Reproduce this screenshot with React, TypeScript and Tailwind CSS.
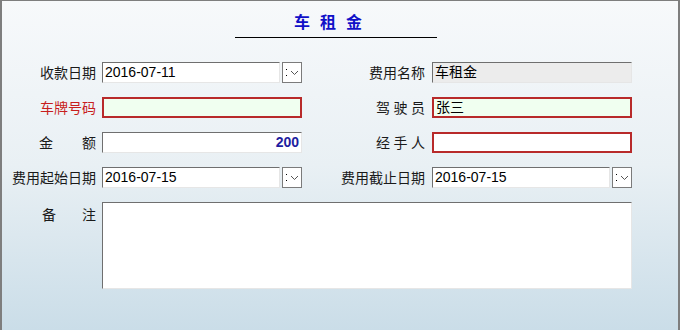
const cjk = { fontFamily: '"Noto Sans CJK SC", "Noto Sans", sans-serif' };
const latin = { fontFamily: '"Liberation Sans", "Noto Sans CJK SC", sans-serif' };

function DropButton() {
  return (
    <div className="relative ml-[2px] h-[21px] w-[20px] shrink-0 border border-[#7b7b7b] bg-white">
      <span className="absolute left-[3px] top-[6px] h-[1px] w-[1px] bg-black" />
      <span className="absolute left-[3px] top-[12px] h-[1px] w-[1px] bg-black" />
      <svg className="absolute left-[7px] top-[7px]" width="9" height="6" viewBox="0 0 9 6">
        <path d="M1 1 L4.5 4.5 L8 1" fill="none" stroke="#555" strokeWidth="1" />
      </svg>
    </div>
  );
}

function TextBox({
  value,
  variant = 'plain',
  align = 'left',
  bold = false,
}: {
  value?: string;
  variant?: 'plain' | 'gray' | 'required' | 'requiredWhite';
  align?: 'left' | 'right';
  bold?: boolean;
}) {
  const base =
    variant === 'required' || variant === 'requiredWhite'
      ? 'border-2 border-[#b82a2a]'
      : 'border border-t-[#6f6f6f] border-l-[#6f6f6f] border-b-[#e6e6e6] border-r-[#e6e6e6]';
  const bg =
    variant === 'gray' ? 'bg-[#ececec]' : variant === 'required' ? 'bg-[#f0fff0]' : 'bg-white';
  return (
    <div
      className={`flex h-[21px] w-full items-center px-[2px] text-[14px] text-black ${base} ${bg} ${
        align === 'right' ? 'justify-end' : ''
      }`}
      style={latin}
    >
      <span className={bold ? 'font-bold text-[#1e1ea0]' : ''}>{value}</span>
    </div>
  );
}

function DateBox({ value }: { value: string }) {
  return (
    <div className="flex h-[21px] w-[200px]">
      <div className="w-[178px]">
        <TextBox value={value} />
      </div>
      <DropButton />
    </div>
  );
}

function Label({ text, red = false, spread, right = false }: { text: string; red?: boolean; spread?: number; right?: boolean }) {
  return (
    <div
      className={`flex h-[21px] items-center justify-end text-[14px] ${right ? 'pr-[7px]' : 'pr-[6px]'} ${
        red ? 'text-[#c81e1e]' : 'text-[#1a1a1a]'
      }`}
      style={cjk}
    >
      {spread ? (
        <div className="flex justify-between" style={{ width: spread }}>
          {text.split('').map((c, i) => (
            <span key={i}>{c}</span>
          ))}
        </div>
      ) : (
        <span>{text}</span>
      )}
    </div>
  );
}

export default function App() {
  return (
    <div className="h-[330px] w-[680px] overflow-hidden border-l-2 border-r-2 border-t border-[#7e7e7e] bg-gradient-to-b from-[#f7f9fb] via-[#e9f0f4] to-[#cadde8]">
      {/* Title */}
      <div className="ml-[233px] mt-[8px] w-[202px] border-b border-black pb-[3px] pl-[59px]">
        <span className="text-[16px] font-bold tracking-[10px] text-[#1010c8]" style={cjk}>
          车租金
        </span>
      </div>

      {/* Form */}
      <div className="mt-[24px] grid grid-cols-[100px_200px_130px_200px] gap-y-[14px]">
        <Label text="收款日期" />
        <DateBox value="2016-07-11" />
        <Label text="费用名称" right />
        <TextBox value="车租金" variant="gray" />

        <Label text="车牌号码" red />
        <TextBox variant="required" />
        <Label text="驾驶员" spread={49} right />
        <TextBox value="张三" variant="required" />

        <Label text="金额" spread={57} />
        <TextBox value="200" align="right" bold />
        <Label text="经手人" spread={49} right />
        <TextBox variant="requiredWhite" />

        <Label text="费用起始日期" />
        <DateBox value="2016-07-15" />
        <Label text="费用截止日期" right />
        <DateBox value="2016-07-15" />

        <div className="flex items-start justify-end pr-[6px] pt-[2px] text-[14px] text-[#1a1a1a]" style={cjk}>
          <div className="flex w-[54px] justify-between">
            <span>备</span>
            <span>注</span>
          </div>
        </div>
        <div className="col-span-3 h-[87px] w-[530px] border border-t-[#6f6f6f] border-l-[#6f6f6f] border-b-[#e6e6e6] border-r-[#e6e6e6] bg-white" />
      </div>
    </div>
  );
}
